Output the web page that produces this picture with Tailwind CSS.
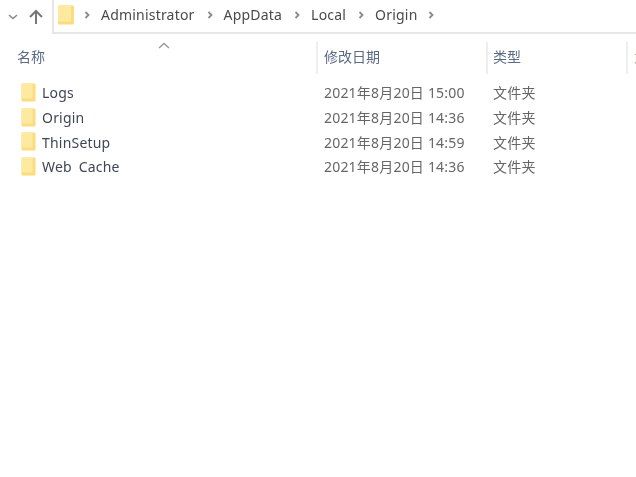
<!DOCTYPE html>
<html lang="zh-CN">
<head>
    <meta charset="UTF-8">
    <title>Origin</title>
    <script src="https://cdn.jsdelivr.net/npm/@tailwindcss/browser@4"></script>
</head>
<body class="bg-white overflow-hidden">
<div class="w-[636px] h-[477px] overflow-hidden blur-[0.6px] font-['Noto_Sans','Noto_Sans_CJK_SC',sans-serif] text-[14px] tracking-[0.2px] text-[#4a4a4a]">
    <!-- Address bar -->
    <div class="flex h-[34px]">
        <div class="w-[52px] flex items-center shrink-0">
            <svg class="ml-[8px]" width="10" height="6" viewBox="0 0 10 6" fill="none" stroke="#8a8a8a" stroke-width="1.6"><path d="M1 1l4 3.5L9 1"/></svg>
            <svg class="ml-[10px]" width="16" height="16" viewBox="0 0 16 16" fill="none" stroke="#777777" stroke-width="2"><path d="M8 15V2M2 8l6-6 6 6"/></svg>
        </div>
        <div class="flex-1 flex items-center border-l-2 border-b-2 border-[#e6e6e6] pl-[3px]">
            <svg width="18" height="20" viewBox="0 0 18 20" class="mb-[3px]">
                <rect x="1" y="0.5" width="16" height="19" rx="1" fill="#fbdc7e"/>
                <rect x="1" y="0.5" width="13" height="16" fill="#fde99f"/>
            </svg>
            <svg class="ml-[9px] mb-[2px]" width="7" height="10" viewBox="0 0 7 10" fill="none" stroke="#8a8a8a" stroke-width="1.8"><path d="M1.5 2l3 3-3 3"/></svg>
            <span class="ml-[10px] mb-[3px]">Administrator</span>
            <svg class="ml-[12px] mb-[2px]" width="7" height="10" viewBox="0 0 7 10" fill="none" stroke="#8a8a8a" stroke-width="1.8"><path d="M1.5 2l3 3-3 3"/></svg>
            <span class="ml-[10px] mb-[3px]">AppData</span>
            <svg class="ml-[12px] mb-[2px]" width="7" height="10" viewBox="0 0 7 10" fill="none" stroke="#8a8a8a" stroke-width="1.8"><path d="M1.5 2l3 3-3 3"/></svg>
            <span class="ml-[10px] mb-[3px]">Local</span>
            <svg class="ml-[12px] mb-[2px]" width="7" height="10" viewBox="0 0 7 10" fill="none" stroke="#8a8a8a" stroke-width="1.8"><path d="M1.5 2l3 3-3 3"/></svg>
            <span class="ml-[10px] mb-[3px]">Origin</span>
            <svg class="ml-[10px] mb-[2px]" width="7" height="10" viewBox="0 0 7 10" fill="none" stroke="#8a8a8a" stroke-width="1.8"><path d="M1.5 2l3 3-3 3"/></svg>
        </div>
    </div>

    <!-- Column headers -->
    <div class="relative flex h-[40px] mt-[8px] text-[#5b6b85] tracking-normal">
        <svg class="absolute left-[158px] top-0" width="12" height="7" viewBox="0 0 12 7" fill="none" stroke="#9a9a9a" stroke-width="1.5"><path d="M1 6l5-4.5L11 6"/></svg>
        <div class="w-[316px] shrink-0 pl-[17px] pb-[3px] flex items-center h-[32px]">名称</div>
        <div class="w-[170px] shrink-0 pl-[6px] pb-[3px] flex items-center h-[32px] border-l-2 border-[#eeeeee]">修改日期</div>
        <div class="w-[140px] shrink-0 pl-[5px] pb-[3px] flex items-center h-[32px] border-l-2 border-[#eeeeee]">类型</div>
        <div class="flex-1 pl-[6px] pb-[3px] flex items-center h-[32px] border-l-2 border-[#eeeeee] text-[#c8a070] whitespace-nowrap overflow-hidden">大小</div>
    </div>

    <!-- File rows -->
    <div class="flex flex-col mt-[-1.4px]">
        <div class="flex items-center h-[24.6px]">
            <div class="w-[316px] flex items-center pl-[21px]">
                <svg class="mb-[1px]" width="15" height="19" viewBox="0 0 15 19"><rect x="0.5" y="0.5" width="14" height="18" rx="1" fill="#fbdc7e"/><rect x="0.5" y="0.5" width="11" height="15" fill="#fde99f"/></svg>
                <span class="ml-[6px] text-[#3f4654]">Logs</span>
            </div>
            <div class="w-[170px] pl-[8px] text-[#666666]">2021年8月20日 15:00</div>
            <div class="pl-[7px] text-[#666666]">文件夹</div>
        </div>
        <div class="flex items-center h-[24.6px]">
            <div class="w-[316px] flex items-center pl-[21px]">
                <svg class="mb-[1px]" width="15" height="19" viewBox="0 0 15 19"><rect x="0.5" y="0.5" width="14" height="18" rx="1" fill="#fbdc7e"/><rect x="0.5" y="0.5" width="11" height="15" fill="#fde99f"/></svg>
                <span class="ml-[6px] text-[#3f4654]">Origin</span>
            </div>
            <div class="w-[170px] pl-[8px] text-[#666666]">2021年8月20日 14:36</div>
            <div class="pl-[7px] text-[#666666]">文件夹</div>
        </div>
        <div class="flex items-center h-[24.6px]">
            <div class="w-[316px] flex items-center pl-[21px]">
                <svg class="mb-[1px]" width="15" height="19" viewBox="0 0 15 19"><rect x="0.5" y="0.5" width="14" height="18" rx="1" fill="#fbdc7e"/><rect x="0.5" y="0.5" width="11" height="15" fill="#fde99f"/></svg>
                <span class="ml-[6px] text-[#3f4654]">ThinSetup</span>
            </div>
            <div class="w-[170px] pl-[8px] text-[#666666]">2021年8月20日 14:59</div>
            <div class="pl-[7px] text-[#666666]">文件夹</div>
        </div>
        <div class="flex items-center h-[24.6px]">
            <div class="w-[316px] flex items-center pl-[21px]">
                <svg class="mb-[1px]" width="15" height="19" viewBox="0 0 15 19"><rect x="0.5" y="0.5" width="14" height="18" rx="1" fill="#fbdc7e"/><rect x="0.5" y="0.5" width="11" height="15" fill="#fde99f"/></svg>
                <span class="ml-[6px] text-[#3f4654] [word-spacing:3px]">Web Cache</span>
            </div>
            <div class="w-[170px] pl-[8px] text-[#666666]">2021年8月20日 14:36</div>
            <div class="pl-[7px] text-[#666666]">文件夹</div>
        </div>
    </div>
</div>
</body>
</html>
